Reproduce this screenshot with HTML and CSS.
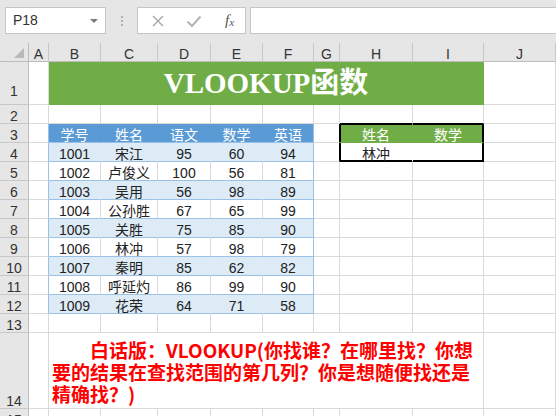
FILE: index.html
```html
<!DOCTYPE html>
<html>
<head>
<meta charset="utf-8">
<title>VLOOKUP函数</title>
<link rel="stylesheet" href="styles.css">
</head>
<body>
<div class="toolbar">
  <div class="namebox">P18<span class="drop"></span></div>
  <div class="grip"><i></i><i></i><i></i></div>
  <div class="fbuttons">
    <svg class="fb" width="14" height="14" viewBox="0 0 14 14"><path d="M2 2L12 12M12 2L2 12" stroke="#a6a6a6" stroke-width="1.4" fill="none"/></svg>
    <svg class="fb" width="16" height="14" viewBox="0 0 16 14"><path d="M1.5 7.5L6 12L14.5 2.5" stroke="#b4b4b4" stroke-width="2" fill="none"/></svg>
    <span class="fx">f<sub>x</sub></span>
  </div>
  <div class="formula"></div>
</div>

<table class="sheet">
  <colgroup>
    <col class="w-rh"><col class="w-a"><col class="w-b"><col class="w-c"><col class="w-d"><col class="w-e">
    <col class="w-f"><col class="w-g"><col class="w-h"><col class="w-i"><col class="w-j">
  </colgroup>
  <thead>
    <tr>
      <th class="corner"><span class="tri"></span></th>
      <th>A</th><th>B</th><th>C</th><th>D</th><th>E</th><th>F</th><th>G</th><th>H</th><th>I</th><th>J</th>
    </tr>
  </thead>
  <tbody>
    <tr class="r-title">
      <th>1</th><td></td>
      <td colspan="8" class="title">VLOOKUP函数</td>
      <td></td>
    </tr>
    <tr>
      <th>2</th><td></td><td></td><td></td><td></td><td></td><td></td><td></td>
      <td class="sel-t"></td><td class="sel-t"></td><td></td>
    </tr>
    <tr>
      <th>3</th><td class="edge"></td>
      <td class="hd">学号</td><td class="hd">姓名</td><td class="hd">语文</td><td class="hd">数学</td><td class="hd last">英语</td>
      <td class="sel-l"></td>
      <td class="lk-h lk-first">姓名</td><td class="lk-h lk-end">数学</td>
      <td></td>
    </tr>
    <tr>
      <th>4</th><td class="edge"></td>
      <td class="band">1001</td><td class="band">宋江</td><td class="band">95</td><td class="band">60</td><td class="band last">94</td>
      <td class="sel-l"></td>
      <td class="lk lk-first">林冲</td><td class="lk lk-end"></td>
      <td></td>
    </tr>
    <tr>
      <th>5</th><td class="edge"></td>
      <td class="row">1002</td><td class="row">卢俊义</td><td class="row">100</td><td class="row">56</td><td class="row last">81</td>
      <td></td><td></td><td></td><td></td>
    </tr>
    <tr>
      <th>6</th><td class="edge"></td>
      <td class="band">1003</td><td class="band">吴用</td><td class="band">56</td><td class="band">98</td><td class="band last">89</td>
      <td></td><td></td><td></td><td></td>
    </tr>
    <tr>
      <th>7</th><td class="edge"></td>
      <td class="row">1004</td><td class="row">公孙胜</td><td class="row">67</td><td class="row">65</td><td class="row last">99</td>
      <td></td><td></td><td></td><td></td>
    </tr>
    <tr>
      <th>8</th><td class="edge"></td>
      <td class="band">1005</td><td class="band">关胜</td><td class="band">75</td><td class="band">85</td><td class="band last">90</td>
      <td></td><td></td><td></td><td></td>
    </tr>
    <tr>
      <th>9</th><td class="edge"></td>
      <td class="row">1006</td><td class="row">林冲</td><td class="row">57</td><td class="row">98</td><td class="row last">79</td>
      <td></td><td></td><td></td><td></td>
    </tr>
    <tr>
      <th>10</th><td class="edge"></td>
      <td class="band">1007</td><td class="band">秦明</td><td class="band">85</td><td class="band">62</td><td class="band last">82</td>
      <td></td><td></td><td></td><td></td>
    </tr>
    <tr>
      <th>11</th><td class="edge"></td>
      <td class="row">1008</td><td class="row">呼延灼</td><td class="row">86</td><td class="row">99</td><td class="row last">90</td>
      <td></td><td></td><td></td><td></td>
    </tr>
    <tr>
      <th>12</th><td class="edge"></td>
      <td class="band">1009</td><td class="band">花荣</td><td class="band">64</td><td class="band">71</td><td class="band last">58</td>
      <td></td><td></td><td></td><td></td>
    </tr>
    <tr>
      <th>13</th><td></td><td></td><td></td><td></td><td></td><td></td><td></td><td></td><td></td><td></td>
    </tr>
    <tr class="r-note">
      <th>14</th><td></td>
      <td colspan="8" class="note">白话版：VLOOKUP(你找谁？在哪里找？你想<br>要的结果在查找范围的第几列？你是想随便找还是<br>精确找？)</td>
      <td></td>
    </tr>
    <tr>
      <th>15</th><td></td><td></td><td></td><td></td><td></td><td></td><td></td><td></td><td></td><td></td>
    </tr>
  </tbody>
</table>
</body>
</html>
```

FILE: styles.css
```css
body {
  margin: 0;
  background-color: #fff;
  font-family: "Liberation Sans", "Noto Sans CJK SC", sans-serif;
  overflow: hidden;
}

/* formula bar */
.toolbar {
  display: flex;
  align-items: center;
  height: 43px;
  background-color: #e6e6e6;
  box-sizing: border-box;
  padding: 0 0 2px 5px;
}

.namebox {
  position: relative;
  width: 101px;
  height: 27px;
  box-sizing: border-box;
  background-color: #fff;
  border: 1px solid #c6c6c6;
  padding-left: 7px;
  font-size: 14px;
  line-height: 25px;
  color: #333;
}

.drop {
  position: absolute;
  right: 7px;
  top: 11px;
  border-left: 4px solid transparent;
  border-right: 4px solid transparent;
  border-top: 4px solid #7a7a7a;
}

.grip {
  display: flex;
  flex-direction: column;
  gap: 2px;
  margin: 0 14px 0 15px;
}

.grip i {
  display: block;
  width: 2px;
  height: 2px;
  background-color: #b0b0b0;
}

.fbuttons {
  display: flex;
  align-items: center;
  width: 109px;
  height: 27px;
  box-sizing: border-box;
  background-color: #fff;
  border: 1px solid #c6c6c6;
  padding-left: 13px;
}

.fb {
  margin-right: 21px;
}

.fbuttons .fb + .fb {
  margin-right: 23px;
}

.fx {
  font-family: "Liberation Serif", serif;
  font-style: italic;
  font-size: 15px;
  color: #555;
}

.fx sub {
  font-size: 11px;
  vertical-align: -1px;
}

.formula {
  flex: 1;
  height: 27px;
  margin-left: 4px;
  box-sizing: border-box;
  background-color: #fff;
  border: 1px solid #c6c6c6;
  border-right: none;
}

/* grid */
.sheet {
  table-layout: fixed;
  width: 556px;
  border-collapse: separate;
  border-spacing: 0;
}

.w-rh { width: 29px; }
.w-a { width: 20px; }
.w-b { width: 52px; }
.w-c { width: 57px; }
.w-d { width: 53px; }
.w-e { width: 52px; }
.w-f { width: 51px; }
.w-g { width: 26px; }
.w-h { width: 73px; }
.w-i { width: 71px; }
.w-j { width: 72px; }

.sheet tr {
  height: 19px;
}

.sheet tr.r-title {
  height: 43px;
}

.sheet tr.r-note {
  height: 76px;
}

/* text sits low in the cell, like the default bottom alignment */
.sheet th,
.sheet td {
  padding: 5px 2px 0;
  border-right: 1px solid #d9d9d9;
  border-bottom: 1px solid #d9d9d9;
  font-size: 14px;
  line-height: 13px;
  font-weight: normal;
  color: #222;
  text-align: center;
  vertical-align: bottom;
  white-space: nowrap;
}

.sheet thead th {
  background-color: #e6e6e6;
  border-right-color: #c8c8c8;
  border-bottom-color: #bdbdbd;
  color: #333;
}

.sheet thead th.corner {
  text-align: right;
  padding: 0 4px 3px 0;
  font-size: 0;
  line-height: 0;
  border-right-color: #bdbdbd;
}

.tri {
  display: inline-block;
  border-left: 10px solid transparent;
  border-bottom: 10px solid #b9b9b9;
}

.sheet tbody th {
  background-color: #e6e6e6;
  border-right-color: #bdbdbd;
  border-bottom-color: #c8c8c8;
  color: #333;
}

.sheet tr.r-title th {
  padding-bottom: 6px;
}

.sheet td.title {
  padding: 0 2px;
  background-color: #70ad47;
  border-color: #70ad47;
  color: #fff;
  font-family: "Liberation Serif", "Noto Sans CJK SC", serif;
  font-size: 29px;
  font-weight: bold;
  line-height: 30px;
  vertical-align: middle;
}

/* score table */
.sheet td.edge {
  border-right-color: #9bc2e6;
}

.sheet td.hd {
  background-color: #5b9bd5;
  border-right-color: #5b9bd5;
  border-bottom-color: #9bc2e6;
  color: #fff;
}

.sheet td.band {
  background-color: #ddebf7;
  border-right-color: #ddebf7;
  border-bottom-color: #9bc2e6;
}

.sheet td.row {
  border-bottom-color: #9bc2e6;
}

.sheet td.last {
  border-right-color: #9bc2e6;
}

/* lookup box */
.sheet td.sel-t {
  border-bottom-color: #000;
}

.sheet td.sel-l {
  border-right-color: #000;
}

.sheet td.lk-h {
  background-color: #70ad47;
  border-bottom-color: #70ad47;
  color: #fff;
}

.sheet td.lk {
  border-bottom-color: #000;
}

.sheet td.lk-first {
  border-right-color: #70ad47;
}

.sheet td.lk.lk-first {
  border-right-color: #fff;
}

.sheet td.lk-end {
  border-right-color: #000;
}

.sheet td.lk-h.lk-first { box-shadow: inset 1px 1px 0 #000; }
.sheet td.lk-h.lk-end { box-shadow: inset -1px 1px 0 #000; }
.sheet td.lk.lk-first { box-shadow: inset 1px -1px 0 #000; }
.sheet td.lk.lk-end { box-shadow: inset -1px -1px 0 #000; }

.sheet td.note {
  text-align: left;
  padding: 0 0 3px 3px;
  text-indent: 2em;
  color: #ff0000;
  font-family: "Noto Sans CJK SC", sans-serif;
  font-size: 19px;
  font-weight: bold;
  line-height: 22px;
}
```
